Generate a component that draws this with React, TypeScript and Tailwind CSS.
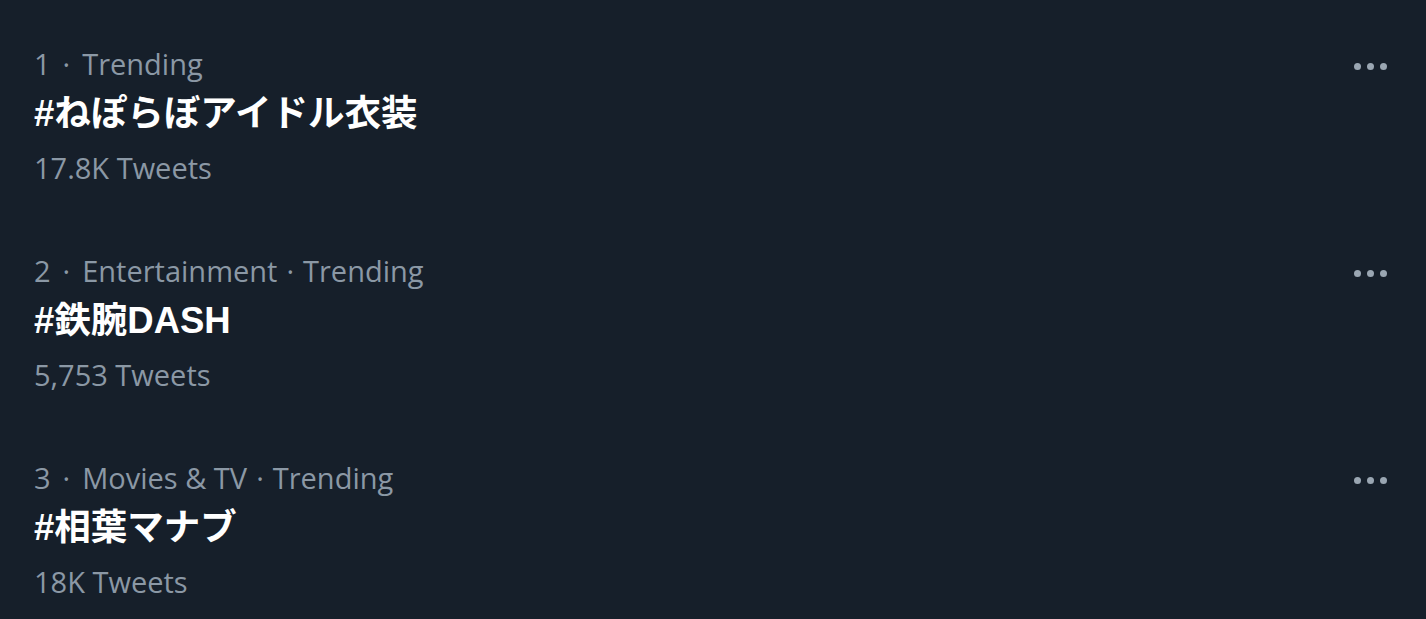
const trends = [
  { rank: "1", parts: ["Trending"], title: "#ねぽらぼアイドル衣装", count: "17.8K Tweets" },
  { rank: "2", parts: ["Entertainment", "Trending"], title: "#鉄腕DASH", count: "5,753 Tweets" },
  { rank: "3", parts: ["Movies & TV", "Trending"], title: "#相葉マナブ", count: "18K Tweets" },
];

function MoreDots() {
  return (
    <div className="mt-[2px] flex h-[40px] items-center gap-[6px]">
      <span className="h-[7px] w-[7px] rounded-full bg-[#9aa6b2]" />
      <span className="h-[7px] w-[7px] rounded-full bg-[#9aa6b2]" />
      <span className="h-[7px] w-[7px] rounded-full bg-[#9aa6b2]" />
    </div>
  );
}

export default function App() {
  return (
    <div
      className="min-h-screen w-full bg-[#161f2a]"
      style={{ fontFamily: '"Open Sans", "Liberation Sans", "Noto Sans CJK JP", sans-serif' }}
    >
      {trends.map((t) => (
        <div key={t.title} className="flex h-[207px] justify-between pl-[34px] pr-[39px] pt-[44px]">
          <div className="flex flex-col">
            <div className="whitespace-nowrap text-[29px] leading-[40px] text-[#8b98a5]">
              <span>{t.rank}</span>
              <span className="px-[12px]">·</span>
              {t.parts.map((p, i) => (
                <span key={p}>
                  {i > 0 && <span className="px-[9px]">·</span>}
                  {p}
                </span>
              ))}
            </div>
            <div
              className="mt-[5px] text-[36.5px] font-bold leading-[50px] text-white"
              style={{ fontFamily: '"Liberation Sans", Arial, "Noto Sans CJK JP", sans-serif' }}
            >
              {t.title}
            </div>
            <div className="mt-[9px] text-[29px] leading-[40px] text-[#8b98a5]">{t.count}</div>
          </div>
          <MoreDots />
        </div>
      ))}
    </div>
  );
}
